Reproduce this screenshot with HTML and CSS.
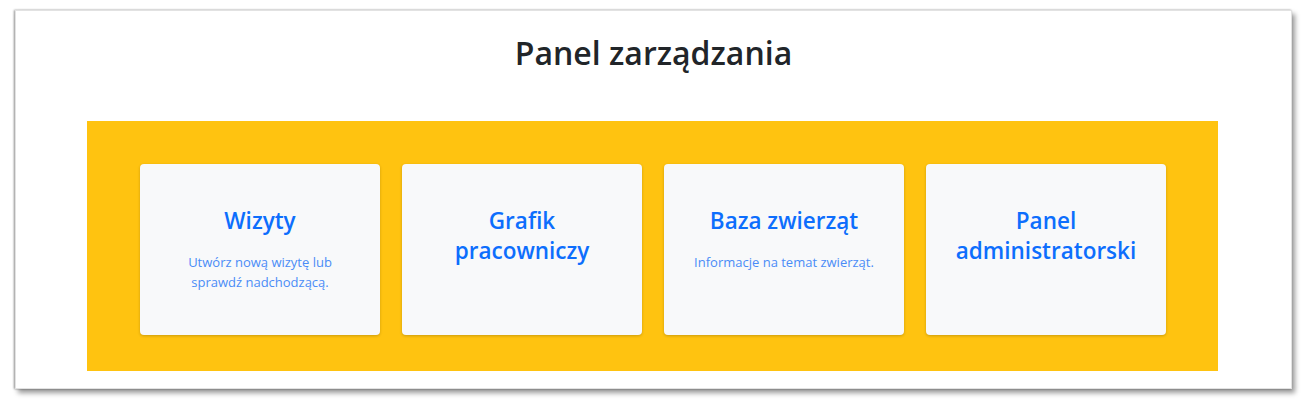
FILE: index.html
```html
<!DOCTYPE html>
<html lang="pl">
<head>
    <meta charset="UTF-8">
    <meta name="viewport" content="width=device-width, initial-scale=1.0">
    <title>Panel zarządzania</title>
    <link rel="stylesheet" href="styles.css">
</head>
<body>
    <div class="frame">
        <header>
            <h1>Panel zarządzania</h1>
        </header>
        <main class="panel">
            <a class="tile" href="#">
                <h3>Wizyty</h3>
                <p>Utwórz nową wizytę lub<br>sprawdź nadchodzącą.</p>
            </a>
            <a class="tile" href="#">
                <h3>Grafik<br>pracowniczy</h3>
            </a>
            <a class="tile" href="#">
                <h3>Baza zwierząt</h3>
                <p>Informacje na temat zwierząt.</p>
            </a>
            <a class="tile" href="#">
                <h3>Panel<br>administratorski</h3>
            </a>
        </main>
    </div>
</body>
</html>
```

FILE: styles.css
```css
/* General Styles */
body {
    font-family: "Open Sans", "Noto Sans", sans-serif;
    margin: 0;
    padding: 10px 16px 23px 15px;
    background-color: #fff;
    color: #212529;
}
.frame {
    height: 377px;
    border: 1px solid #e2e2e2;
    background-color: #fff;
    box-shadow: -1px 0 2px rgba(0, 0, 0, 0.4), 3px 4px 5px rgba(0, 0, 0, 0.4);
}
header {
    text-align: center;
    padding-top: 23px;
    height: 85px;
    box-sizing: border-box;
}
h1 {
    margin: 0;
    font-size: 32px;
    font-weight: 600;
    line-height: 1.2;
}
/* Yellow tiles area */
.panel {
    margin: 25px 73px 0 71px;
    padding: 43px 52px 36px 53px;
    background-color: #ffc310;
    display: grid;
    grid-template-columns: repeat(4, 1fr);
    gap: 22px;
}
.tile {
    height: 171px;
    box-sizing: border-box;
    padding-top: 42px;
    background-color: #f8f9fa;
    border-radius: 4px;
    box-shadow: 0 1px 3px rgba(0, 0, 0, 0.2);
    text-align: center;
    text-decoration: none;
    color: #0d6efd;
}
.tile h3 {
    margin: 0 0 16px;
    font-size: 22.5px;
    font-weight: 600;
    line-height: 30px;
}
.tile p {
    margin: 0;
    font-size: 13px;
    line-height: 20px;
    color: #4a8cf7;
}
```
